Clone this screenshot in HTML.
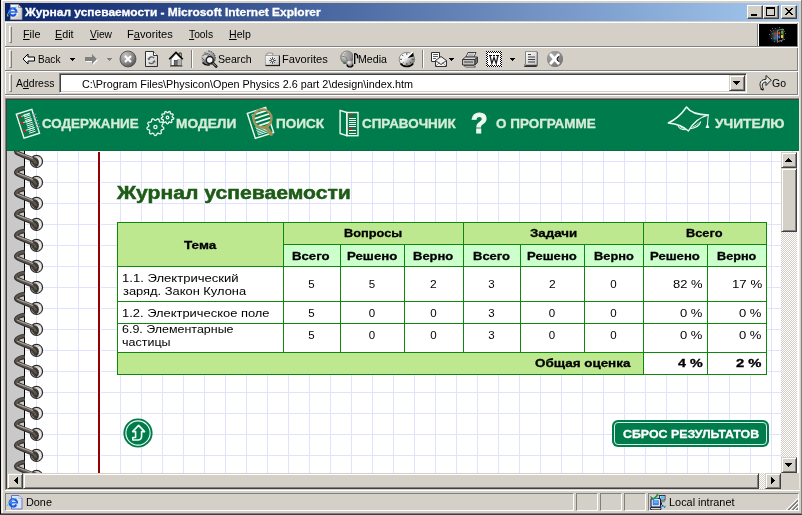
<!DOCTYPE html>
<html>
<head>
<meta charset="utf-8">
<title>Журнал успеваемости</title>
<style>
html,body{margin:0;padding:0;}
body{width:802px;height:515px;overflow:hidden;background:#d4d0c8;font-family:"Liberation Sans",sans-serif;font-size:11px;color:#000;position:relative;}
div,span,svg{position:absolute;}
.t{white-space:nowrap;transform-origin:0 0;display:block;}
u{text-decoration:underline;}
.btn{background:#d4d0c8;box-sizing:border-box;border:1px solid;border-color:#d4d0c8 #404040 #404040 #d4d0c8;box-shadow:inset 1px 1px 0 #fff,inset -1px -1px 0 #808080;}
.tb{background:#d4d0c8;box-sizing:border-box;border:1px solid;border-color:#fff #404040 #404040 #fff;box-shadow:inset -1px -1px 0 #808080;}
.grip{width:3px;box-sizing:border-box;border:1px solid;border-color:#fff #808080 #808080 #fff;}
.dither{background-image:conic-gradient(#fff 25%,#d4d0c8 0 50%,#fff 0 75%,#d4d0c8 0);background-size:2px 2px;}
.sunk{box-sizing:border-box;border:1px solid;border-color:#808080 #fff #fff #808080;}
#root{left:0;top:0;width:802px;height:515px;overflow:hidden;will-change:transform;}

</style>
</head>
<body>
<div id="root">
<svg width="0" height="0" style="left:0;top:0"><defs>
<radialGradient id="gStop" cx="0.35" cy="0.3" r="0.8"><stop offset="0" stop-color="#c8c8c8"/><stop offset="0.55" stop-color="#8c8c8c"/><stop offset="1" stop-color="#4a4a4a"/></radialGradient>
<radialGradient id="gGlobe" cx="0.35" cy="0.3" r="0.8"><stop offset="0" stop-color="#f0f0f0"/><stop offset="0.5" stop-color="#a8a8a8"/><stop offset="1" stop-color="#505050"/></radialGradient>
<linearGradient id="gPage" x1="0" y1="0" x2="1" y2="1"><stop offset="0" stop-color="#ffffff"/><stop offset="1" stop-color="#c4c4c4"/></linearGradient>
<linearGradient id="gFold" x1="0" y1="0" x2="1" y2="1"><stop offset="0" stop-color="#f4f4f4"/><stop offset="1" stop-color="#707070"/></linearGradient>
<linearGradient id="gWire" x1="0" y1="0" x2="0" y2="1"><stop offset="0" stop-color="#4a4540"/><stop offset="0.5" stop-color="#b0a8a0"/><stop offset="1" stop-color="#3a3530"/></linearGradient>
<radialGradient id="gRing" cx="0.6" cy="0.55" r="0.6"><stop offset="0" stop-color="#e8e8e8"/><stop offset="0.6" stop-color="#a0a0a0"/><stop offset="1" stop-color="#505050"/></radialGradient>
<radialGradient id="gHaze" cx="0.5" cy="0.5" r="0.5"><stop offset="0" stop-color="#7088a0" stop-opacity="0.75"/><stop offset="0.6" stop-color="#506878" stop-opacity="0.45"/><stop offset="1" stop-color="#304050" stop-opacity="0"/></radialGradient>
</defs></svg>
<div style="left:0px;top:0px;width:1px;height:515px;background:#000;"></div>
<div style="left:1px;top:0px;width:800px;height:1px;background:#fff;"></div>
<div style="left:1px;top:0px;width:1px;height:513px;background:#ebe9e5;"></div>
<div style="left:2px;top:1px;width:1px;height:512px;background:#f1f0ee;"></div>
<div style="left:801px;top:0px;width:1px;height:515px;background:#808080;"></div>
<div style="left:1px;top:513px;width:801px;height:1px;background:#808080;"></div>
<div style="left:0px;top:514px;width:802px;height:1px;background:#404040;"></div>
<div style="left:5px;top:3px;width:794px;height:18px;background:linear-gradient(to right,#0a246a 0%,#a6caf0 100%);"></div>
<svg style="left:6px;top:3px" width="18" height="18" viewBox="0 0 18 18" >
<path d="M4.5 1.5h8l3.5 3.5v11.5h-11.5z" fill="url(#gPage)" stroke="#9a9a9a" stroke-width="0.8"/>
<path d="M12.5 1.5v3.5h3.5z" fill="#505050"/>
<path d="M12.9 2.6v2h2z" fill="#fff"/>
<circle cx="6.8" cy="9" r="3.6" fill="none" stroke="#1c50d8" stroke-width="2.2"/>
<rect x="3" y="8.2" width="8" height="1.6" fill="#2a6cf0"/>
<path d="M7 9.8h5v3h-5z" fill="#eee" opacity="0.9"/>
<path d="M9.8 10.6c-.6 1.4-1.8 2-3 2" stroke="#1c50d8" stroke-width="2" fill="none"/>
<path d="M1.5 12c1-4 5-7.5 9-7.8" stroke="#38b0f0" stroke-width="1" fill="none"/>
<path d="M1.3 11.5l.8 2" stroke="#d0b020" stroke-width="1.2"/>
</svg>
<span class="t" id="t0" style="left:25.27px;top:4.65px;font-size:11.1px;line-height:15px;font-weight:bold;color:#fff;transform:scaleX(1.0773);-webkit-text-stroke:0.3px #fff;">Журнал успеваемости - Microsoft Internet Explorer</span>
<div class="tb" style="left:747px;top:5px;width:16px;height:14px;"></div>
<div class="tb" style="left:763px;top:5px;width:16px;height:14px;"></div>
<div class="tb" style="left:781px;top:5px;width:16px;height:14px;"></div>
<div style="left:751px;top:14px;width:6px;height:2px;background:#000;"></div>
<div style="left:766px;top:7px;width:9px;height:9px;box-sizing:border-box;border:1px solid #000;border-top-width:2px"></div>
<svg style="left:785px;top:8px" width="8" height="7" viewBox="0 0 8 7" shape-rendering="crispEdges"><path d="M0 0h2v1h-2zM6 0h2v1h-2zM1 1h2v1h-2zM5 1h2v1h-2zM2 2h4v1h-4zM3 3h2v1h-2zM2 4h4v1h-4zM1 5h2v1h-2zM5 5h2v1h-2zM0 6h2v1h-2zM6 6h2v1h-2z" fill="#000"/></svg>
<div style="left:5px;top:22px;width:794px;height:1px;background:#fff;"></div>
<div style="left:5px;top:22px;width:1px;height:73px;background:#fff;"></div>
<div style="left:797px;top:23px;width:1px;height:72px;background:#808080;"></div>
<div style="left:798px;top:22px;width:1px;height:74px;background:#fff;"></div>
<div style="left:5px;top:46px;width:793px;height:1px;background:#808080;"></div>
<div style="left:5px;top:47px;width:794px;height:1px;background:#fff;"></div>
<div style="left:5px;top:70px;width:793px;height:1px;background:#808080;"></div>
<div style="left:5px;top:71px;width:794px;height:1px;background:#fff;"></div>
<div style="left:5px;top:94px;width:793px;height:1px;background:#808080;"></div>
<div style="left:5px;top:95px;width:794px;height:1px;background:#fff;"></div>
<div class="grip" style="left:9px;top:26px;width:3px;height:17px;"></div>
<div class="grip" style="left:9px;top:50px;width:3px;height:18px;"></div>
<div class="grip" style="left:9px;top:74px;width:3px;height:18px;"></div>
<span class="t" id="t1" style="left:22.56px;top:26.52px;font-size:11.5px;line-height:15px;font-weight:normal;color:#000;transform:scaleX(0.9412);"><u>F</u>ile</span>
<span class="t" id="t2" style="left:54.57px;top:26.52px;font-size:11.5px;line-height:15px;font-weight:normal;color:#000;transform:scaleX(0.9333);"><u>E</u>dit</span>
<span class="t" id="t3" style="left:89.50px;top:26.52px;font-size:11.5px;line-height:15px;font-weight:normal;color:#000;transform:scaleX(0.8889);"><u>V</u>iew</span>
<span class="t" id="t4" style="left:126.53px;top:26.52px;font-size:11.5px;line-height:15px;font-weight:normal;color:#000;transform:scaleX(0.9674);">F<u>a</u>vorites</span>
<span class="t" id="t5" style="left:189.28px;top:26.52px;font-size:11.5px;line-height:15px;font-weight:normal;color:#000;transform:scaleX(0.8952);"><u>T</u>ools</span>
<span class="t" id="t6" style="left:228.58px;top:26.52px;font-size:11.5px;line-height:15px;font-weight:normal;color:#000;transform:scaleX(0.9213);"><u>H</u>elp</span>
<div style="left:757px;top:24px;width:1px;height:22px;background:#808080;"></div>
<div style="left:758px;top:24px;width:1px;height:22px;background:#fff;"></div>
<div style="left:759px;top:24px;width:38px;height:22px;background:#000;"></div>
<svg style="left:759px;top:24px" width="38" height="22" viewBox="0 0 38 22" >
<ellipse cx="18" cy="11.5" rx="9" ry="8.5" fill="url(#gHaze)"/>
<g fill="#8898a8" opacity="0.7"><rect x="11" y="6" width="1" height="1"/><rect x="13" y="4" width="1" height="1"/><rect x="12" y="14" width="1" height="1"/><rect x="15" y="17" width="1" height="1"/><rect x="10" y="10" width="1" height="1"/><rect x="24" y="5" width="1" height="1"/><rect x="26" y="9" width="1" height="1"/><rect x="25" y="15" width="1" height="1"/><rect x="20" y="3" width="1" height="1"/><rect x="22" y="17" width="1" height="1"/></g>
<g fill="#3a8a3a" opacity="0.8"><rect x="16" y="4" width="1" height="1"/><rect x="25" y="7" width="1" height="1"/><rect x="13" y="9" width="1" height="1"/></g>
<g fill="#b04030" opacity="0.8"><rect x="12" y="7" width="1" height="1"/><rect x="14" y="6" width="1" height="1"/><rect x="18" y="18" width="1" height="1"/></g>
<path d="M18.5 6.5l5.5-1.5v11l-5.5 1.5z" fill="#000" stroke="#c8c8c8" stroke-width="0.6"/>
<rect x="19.3" y="7.6" width="2" height="3" fill="#e04828"/>
<rect x="22" y="6.6" width="2" height="3.2" fill="#38b838"/>
<rect x="19.3" y="11.4" width="2" height="3" fill="#3878e8"/>
<rect x="22" y="10.8" width="2" height="3.2" fill="#f0c818"/>
<rect x="14.5" y="8.5" width="3" height="3" fill="#a04838" opacity="0.75"/>
<rect x="14.5" y="12.5" width="3" height="3" fill="#4870b0" opacity="0.75"/>
</svg>
<svg style="left:22px;top:53px" width="14" height="12" viewBox="0 0 14 12" ><path d="M1 6 L6 1 V4 H12.5 V8 H6 V11 Z" fill="#f4f4f4" stroke="#000" stroke-width="1" stroke-linejoin="miter"/></svg>
<svg style="left:70px;top:58px" width="5" height="3" viewBox="0 0 5 3" shape-rendering="crispEdges"><path d="M0 0h5v1h-5zM1 1h3v1h-3zM2 2h1v1h-1z" fill="#000"/></svg>
<svg style="left:84px;top:53px" width="15" height="13" viewBox="0 0 15 13" ><path d="M14 7 L9 2 V5 H2 V9 H9 V12 Z" fill="#fff"/><path d="M13 6 L8 1 V4 H1 V8 H8 V11 Z" fill="#808080"/></svg>
<svg style="left:107px;top:58px" width="5" height="3" viewBox="0 0 5 3" shape-rendering="crispEdges"><path d="M0 0h5v1h-5zM1 1h3v1h-3zM2 2h1v1h-1z" fill="#808080"/></svg>
<svg style="left:119px;top:50px" width="18" height="18" viewBox="0 0 18 18" ><circle cx="9" cy="9" r="8" fill="url(#gStop)" stroke="#484848" stroke-width="0.8"/><path d="M6 6l6 6M12 6l-6 6" stroke="#fff" stroke-width="2"/></svg>
<svg style="left:144px;top:50px" width="15" height="18" viewBox="0 0 15 18" ><path d="M1.5 1.5h8l4 4v11h-12z" fill="url(#gPage)" stroke="#303030" stroke-width="1"/><path d="M9.5 1.5v4h4" fill="#fff" stroke="#303030" stroke-width="1"/>
<path d="M10.2 8.2a3.2 3.2 0 0 0-5.6 1" fill="none" stroke="#606060" stroke-width="1.3"/><path d="M3.3 8.2l1.3 2.4l1.9-1.9z" fill="#606060"/>
<path d="M4.8 12.3a3.2 3.2 0 0 0 5.6-1" fill="none" stroke="#606060" stroke-width="1.3"/><path d="M11.7 12.3l-1.3-2.4l-1.9 1.9z" fill="#606060"/></svg>
<svg style="left:168px;top:50px" width="16" height="18" viewBox="0 0 16 18" ><path d="M11 3h2.2v4h-2.2z" fill="#e8e8e8" stroke="#000" stroke-width="0.8"/><path d="M3 9v6.5h10.5V9L8 3.5z" fill="#fff" stroke="#404040" stroke-width="0.8"/><path d="M9 9l4.5 0v6.5h-3z" fill="#b0b0b0"/><path d="M1.2 9.2L8 2.3l6.8 6.9" fill="none" stroke="#000" stroke-width="1.6"/><rect x="6.2" y="10.5" width="3" height="5" fill="#707070" stroke="#202020" stroke-width="0.6"/><path d="M2 16h12.5" stroke="#303030" stroke-width="1"/></svg>
<svg style="left:200px;top:50px" width="18" height="18" viewBox="0 0 18 18" ><circle cx="8.300" cy="8" r="7" fill="url(#gGlobe)"/><path d="M8.300 1a7 7 0 0 1 0 14" fill="none" stroke="#303030" stroke-width="1" stroke-dasharray="1.500 1"/><path d="M2.500 12.500a7 7 0 0 0 7 2.400" fill="none" stroke="#101010" stroke-width="1.300"/><path d="M2.500 5.500c2.500-1.500 5-1 6.500 .500M4 3c3 0 6 1 8 3.500M2 8c2 1.500 3 3 3 5" stroke="#606060" stroke-width="1" fill="none"/><circle cx="9.750" cy="10" r="3.500" fill="#f6f6f6" stroke="#202020" stroke-width="1.500"/><path d="M12.600 12.900l3.600 3.600" stroke="#101010" stroke-width="2.600" stroke-linecap="round"/><path d="M12.800 13.100l3 3" stroke="#c8c8c8" stroke-width="0.900" stroke-linecap="round"/></svg>
<svg style="left:264px;top:51px" width="17" height="16" viewBox="0 0 17 16" ><path d="M2.500 4.300l.800-2.200h5l.800 2.200z" fill="#fff" stroke="#707070" stroke-width="0.800"/><rect x="1.500" y="4.600" width="14.500" height="10.500" fill="#000"/><rect x="1.200" y="4.300" width="13.800" height="9.700" fill="url(#gPage)" stroke="#808080" stroke-width="0.500"/><path d="M8.500 6.200v6.600M5.200 9.500h6.600M6.200 7.200l4.600 4.600M10.800 7.200l-4.600 4.600" stroke="#383838" stroke-width="0.900"/><circle cx="8.500" cy="9.500" r="1.300" fill="#fff" stroke="#505050" stroke-width="0.800"/></svg>
<svg style="left:340px;top:50px" width="19" height="18" viewBox="0 0 19 18" ><circle cx="7" cy="7.400" r="6.400" fill="url(#gGlobe)" stroke="#686868" stroke-width="0.700"/><path d="M3 4l5-2.500l3.500 1v5l-4.500 2z" fill="#909090" opacity="0.600"/><path d="M1.500 6l4 1l2 4" stroke="#707070" stroke-width="0.800" fill="none"/><path d="M13.500 3.500v10" stroke="#fff" stroke-width="1"/><path d="M14.600 3.300v10.700" stroke="#000" stroke-width="1.500"/><path d="M14.600 3.600c2.600 .200 3.400 2 3 4.800" stroke="#000" stroke-width="1.400" fill="none"/><circle cx="9.900" cy="13.600" r="3.200" fill="url(#gGlobe)"/><path d="M6.800 14.500a3.300 3.300 0 0 0 6.400 0" fill="none" stroke="#000" stroke-width="1.200"/><rect x="3.200" y="12.600" width="2.200" height="1" fill="#106010"/></svg>
<svg style="left:398px;top:50px" width="18" height="18" viewBox="0 0 18 18" ><defs><linearGradient id="gHist" x1="0" y1="0" x2="1" y2="1"><stop offset="0" stop-color="#ffffff"/><stop offset="0.450" stop-color="#f0f0f0"/><stop offset="0.700" stop-color="#9a9a9a"/><stop offset="1" stop-color="#606060"/></linearGradient></defs><ellipse cx="8.900" cy="9.300" rx="7.700" ry="6.900" fill="url(#gHist)" stroke="#606060" stroke-width="0.700"/><path d="M2.500 13.500a7.700 6.900 0 0 0 12.800 0" fill="none" stroke="#000" stroke-width="1.400"/><path d="M8.600 8.200L15.200 1.800L15.700 6.600Z" fill="#000"/><path d="M8.300 8.300L15 1.700" stroke="#fff" stroke-width="1.500"/><path d="M8.800 3v2M2 9.300h2M8.800 13v2M13.600 9.300h2.200M4 4.800l1.300 1.300M4.200 13.600l1.200-1.200M13 13.200l-1.200-1.200" stroke="#404040" stroke-width="0.900"/></svg>
<svg style="left:430px;top:51px" width="17" height="16" viewBox="0 0 17 16" ><path d="M1.5 1.5h8v9h-8z" fill="#fff" stroke="#303030" stroke-width="1"/><path d="M3 3.5h5M3 5.5h5M3 7.5h3" stroke="#505050" stroke-width="0.9"/><path d="M5.5 9.5l5.5-4l5.5 4v6h-11z" fill="#f0f0f0" stroke="#303030" stroke-width="1"/><path d="M5.5 9.5l5.5 4l5.5-4" fill="none" stroke="#303030" stroke-width="0.9"/><path d="M5.5 15.5l4-4M16.5 15.5l-4-4" stroke="#707070" stroke-width="0.7"/></svg>
<svg style="left:449px;top:58px" width="5" height="3" viewBox="0 0 5 3" shape-rendering="crispEdges"><path d="M0 0h5v1h-5zM1 1h3v1h-3zM2 2h1v1h-1z" fill="#000"/></svg>
<svg style="left:461px;top:51px" width="18" height="17" viewBox="0 0 18 17" ><path d="M5 6l2-4.5h8l-2 4.5z" fill="#fff" stroke="#303030" stroke-width="0.9"/><path d="M7.5 3h5.5M7 4.3h5.5" stroke="#707070" stroke-width="0.7"/><path d="M1.5 8.5l3-2.5h12l-2.5 2.5z" fill="#d8d8d8" stroke="#303030" stroke-width="0.9"/><path d="M1.5 8.5h12.5v5.5h-12.5z" fill="#c0c0c0" stroke="#303030" stroke-width="0.9"/><path d="M14 8.5l2.5-2.5v5.5l-2.5 2.5z" fill="#707070" stroke="#303030" stroke-width="0.9"/><path d="M3 14.5h10l1.5 1.5h-10z" fill="#fff" stroke="#303030" stroke-width="0.8"/><path d="M3 11h9" stroke="#404040" stroke-width="1"/></svg>
<svg style="left:486px;top:51px" width="16" height="16" viewBox="0 0 16 16" shape-rendering="crispEdges"><defs><pattern id="chk" width="2" height="2" patternUnits="userSpaceOnUse"><rect width="2" height="2" fill="#fff"/><rect width="1" height="1" fill="#000"/><rect x="1" y="1" width="1" height="1" fill="#000"/></pattern></defs><rect x="0" y="0" width="16" height="16" fill="url(#chk)"/><rect x="2" y="2" width="12" height="12" fill="#fff"/><path d="M3 4h3M7 4h2M10 4h3" stroke="#000" stroke-width="1"/><path d="M4 4.500l1.800 8l2.200-6l2.200 6l1.800-8" fill="none" stroke="#202020" stroke-width="1.300" shape-rendering="geometricPrecision"/></svg>
<svg style="left:510px;top:58px" width="5" height="3" viewBox="0 0 5 3" shape-rendering="crispEdges"><path d="M0 0h5v1h-5zM1 1h3v1h-3zM2 2h1v1h-1z" fill="#000"/></svg>
<svg style="left:522px;top:51px" width="18" height="17" viewBox="0 0 18 17" ><path d="M3.500 1h12v14l-1.500 1h-12.500l2-1.500z" fill="#303030"/><path d="M3.500 .500h11.500v13.500h-13l1.500-1z" fill="url(#gPage)" stroke="#606060" stroke-width="0.600"/><path d="M6 3.500h3M6 6h7M6 8.500h7M6 11h7" stroke="#404040" stroke-width="1"/></svg>
<svg style="left:546px;top:50px" width="18" height="18" viewBox="0 0 18 18" ><circle cx="9" cy="9" r="8" fill="#8c8c8c"/><circle cx="9" cy="9" r="8" fill="url(#gStop)" opacity="0.450"/><path d="M4.800 4.800l7.500 8.400M4.800 13.200l7.500-8.400" fill="none" stroke="#fff" stroke-width="2.800" stroke-linecap="round"/><path d="M13 6.500c-2.500 1.200-2.500 3.800 0 5" fill="none" stroke="#202020" stroke-width="1.100"/></svg>
<span class="t" id="t7" style="left:38.12px;top:51.52px;font-size:11.5px;line-height:15px;font-weight:normal;color:#000;transform:scaleX(0.8776);">Back</span>
<span class="t" id="t8" style="left:218.04px;top:51.52px;font-size:11.5px;line-height:15px;font-weight:normal;color:#000;transform:scaleX(0.9220);">Search</span>
<span class="t" id="t9" style="left:281.53px;top:51.52px;font-size:11.5px;line-height:15px;font-weight:normal;color:#000;transform:scaleX(0.9674);">Favorites</span>
<span class="t" id="t10" style="left:357.57px;top:51.52px;font-size:11.5px;line-height:15px;font-weight:normal;color:#000;transform:scaleX(0.9256);">Media</span>
<div style="left:191px;top:50px;width:1px;height:18px;background:#808080;"></div>
<div style="left:192px;top:50px;width:1px;height:18px;background:#fff;"></div>
<div style="left:422px;top:50px;width:1px;height:18px;background:#808080;"></div>
<div style="left:423px;top:50px;width:1px;height:18px;background:#fff;"></div>
<span class="t" id="t11" style="left:16.00px;top:75.52px;font-size:11.5px;line-height:15px;font-weight:normal;color:#000;transform:scaleX(0.9102);">A<u>d</u>dress</span>
<div style="left:59px;top:73px;width:688px;height:20px;background:#fff;box-sizing:border-box;border:1px solid;border-color:#808080 #fff #fff #808080;box-shadow:inset 1px 1px 0 #404040,inset -1px -1px 0 #d4d0c8"></div>
<span class="t" id="t12" style="left:81.53px;top:76.52px;font-size:11.5px;line-height:15px;font-weight:normal;color:#000;transform:scaleX(0.9402);">C:\Program Files\Physicon\Open Physics 2.6 part 2\design\index.htm</span>
<div class="btn" style="left:729px;top:75px;width:16px;height:16px;"></div>
<svg style="left:733px;top:81px" width="7" height="4" viewBox="0 0 7 4" shape-rendering="crispEdges"><path d="M0 0h7v1h-7zM1 1h5v1h-5zM2 2h3v1h-3zM3 3h1v1h-1z" fill="#000"/></svg>
<svg style="left:757px;top:74px" width="16" height="18" viewBox="0 0 16 18" ><path d="M5.5 16 C1.5 12 2 5.500 9 5.200 V1.500 L14.200 6.200 L9 11.500 V8 C5.500 8 4 11 6.500 15.200 Z" fill="url(#gPage)" stroke="#202020" stroke-width="1" stroke-linejoin="round"/><path d="M3.500 14.800l3 1.200" stroke="#000" stroke-width="1.2"/></svg>
<span class="t" id="t13" style="left:772.04px;top:75.52px;font-size:11.5px;line-height:15px;font-weight:normal;color:#000;transform:scaleX(0.9123);">Go</span>
<div style="left:5px;top:98px;width:794px;height:1px;background:#808080;"></div>
<div style="left:5px;top:98px;width:1px;height:392px;background:#808080;"></div>
<div style="left:6px;top:99px;width:793px;height:1px;background:#404040;"></div>
<div style="left:6px;top:99px;width:1px;height:390px;background:#404040;"></div>
<div style="left:799px;top:98px;width:1px;height:393px;background:#ece8e4;"></div>
<div style="left:6px;top:489px;width:794px;height:1px;background:#d4d0c8;"></div>
<div style="left:5px;top:490px;width:795px;height:1px;background:#fff;"></div>
<div style="left:7px;top:100px;width:792px;height:51px;background:#007c4c;"></div>
<div style="left:7px;top:150px;width:792px;height:1px;background:#056c42;"></div>
<svg style="left:7px;top:100px" width="792" height="51" viewBox="0 0 792 51"><g transform="translate(9.30,14.30) rotate(-17.9)"><rect x="0" y="0" width="16.3" height="25.1" fill="none" stroke="#eefaf0" stroke-width="1.4"/><path d="M6.5 3.00H13.2" stroke="#eefaf0" stroke-width="0.9"/><path d="M6.5 4.90H13.2" stroke="#eefaf0" stroke-width="0.9"/><path d="M6.5 6.80H13.2" stroke="#eefaf0" stroke-width="0.9"/><path d="M6.5 8.70H13.2" stroke="#eefaf0" stroke-width="0.9"/><path d="M6.5 10.60H13.2" stroke="#eefaf0" stroke-width="0.9"/><path d="M6.5 12.50H13.2" stroke="#eefaf0" stroke-width="0.9"/><path d="M6.5 14.40H13.2" stroke="#eefaf0" stroke-width="0.9"/><path d="M6.5 16.30H13.2" stroke="#eefaf0" stroke-width="0.9"/><path d="M6.5 18.20H13.2" stroke="#eefaf0" stroke-width="0.9"/><path d="M6.5 20.10H13.2" stroke="#eefaf0" stroke-width="0.9"/><path d="M6.5 22.00H13.2" stroke="#eefaf0" stroke-width="0.9"/><path d="M3.5 3.60H13.2" stroke="#eefaf0" stroke-width="0.8"/><circle cx="2.9" cy="3.60" r="1.25" fill="#f01010"/><path d="M3.5 10.00H13.2" stroke="#eefaf0" stroke-width="0.8"/><circle cx="2.9" cy="10.00" r="1.25" fill="#f01010"/><path d="M3.5 18.20H13.2" stroke="#eefaf0" stroke-width="0.8"/><circle cx="2.9" cy="18.20" r="1.25" fill="#f01010"/><path d="M15 5.80H19" stroke="#8a9aa8" stroke-width="1"/><path d="M15 9.10H19" stroke="#8a9aa8" stroke-width="1"/><path d="M15 12.40H19" stroke="#8a9aa8" stroke-width="1"/><path d="M15 15.70H19" stroke="#8a9aa8" stroke-width="1"/><path d="M15 19.00H19" stroke="#8a9aa8" stroke-width="1"/></g><path d="M156.77 27.84 L156.81 28.22 L156.75 28.58 L156.67 28.95 L156.33 29.23 L155.89 29.47 L155.40 29.65 L154.92 29.80 L154.52 29.95 L154.30 30.17 L154.16 30.42 L154.00 30.67 L154.05 31.06 L154.15 31.53 L154.25 32.04 L154.30 32.55 L154.27 33.02 L154.06 33.34 L153.78 33.58 L153.49 33.81 L153.04 33.81 L152.55 33.70 L152.06 33.53 L151.60 33.34 L151.19 33.19 L150.88 33.22 L150.61 33.32 L150.33 33.42 L150.11 33.74 L149.89 34.16 L149.64 34.62 L149.36 35.05 L149.03 35.39 L148.66 35.50 L148.29 35.50 L147.92 35.49 L147.58 35.20 L147.27 34.80 L147.01 34.35 L146.78 33.91 L146.56 33.54 L146.30 33.36 L146.03 33.27 L145.76 33.16 L145.38 33.27 L144.94 33.45 L144.46 33.63 L143.96 33.78 L143.49 33.83 L143.14 33.68 L142.85 33.44 L142.58 33.19 L142.50 32.75 L142.52 32.25 L142.61 31.74 L142.71 31.25 L142.79 30.82 L142.70 30.53 L142.56 30.28 L142.42 30.02 L142.06 29.86 L141.61 29.71 L141.11 29.55 L140.64 29.34 L140.25 29.07 L140.08 28.73 L140.01 28.37 L139.96 28.00 L140.18 27.61 L140.52 27.24 L140.92 26.90 L141.31 26.60 L141.64 26.32 L141.77 26.04 L141.82 25.75 L141.88 25.47 L141.70 25.11 L141.45 24.71 L141.18 24.27 L140.95 23.80 L140.82 23.35 L140.91 22.98 L141.09 22.66 L141.29 22.34 L141.71 22.19 L142.21 22.12 L142.73 22.12 L143.23 22.14 L143.66 22.14 L143.94 22.00 L144.16 21.81 L144.39 21.63 L144.48 21.25 L144.55 20.78 L144.63 20.27 L144.75 19.77 L144.94 19.33 L145.25 19.11 L145.59 18.98 L145.95 18.86 L146.37 19.01 L146.79 19.28 L147.19 19.62 L147.56 19.95 L147.89 20.23 L148.19 20.30 L148.49 20.30 L148.78 20.31 L149.09 20.08 L149.45 19.76 L149.84 19.42 L150.25 19.11 L150.68 18.90 L151.06 18.93 L151.41 19.05 L151.75 19.19 L151.98 19.57 L152.13 20.05 L152.22 20.57 L152.29 21.06 L152.36 21.49 L152.55 21.74 L152.77 21.92 L152.99 22.12 L153.38 22.14 L153.86 22.13 L154.38 22.11 L154.89 22.15 L155.35 22.26 L155.63 22.52 L155.81 22.84 L155.99 23.17 L155.91 23.61 L155.72 24.08 L155.46 24.53 L155.20 24.95 L154.98 25.33 L154.96 25.63 L155.01 25.92 L155.05 26.21 L155.34 26.48 L155.71 26.77 L156.12 27.10 L156.49 27.46 L156.77 27.84Z" fill="none" stroke="#eefaf0" stroke-width="1.3" stroke-linejoin="round"/><circle cx="148.40" cy="27.00" r="1.6" fill="none" stroke="#eefaf0" stroke-width="1.3"/><path d="M165.71 19.40 L165.31 19.50 L164.97 19.59 L164.76 19.72 L164.65 19.90 L164.55 20.08 L164.55 20.34 L164.64 20.69 L164.75 21.08 L164.84 21.48 L164.86 21.86 L164.75 22.15 L164.55 22.33 L164.33 22.50 L164.03 22.54 L163.65 22.46 L163.27 22.30 L162.90 22.13 L162.58 21.97 L162.33 21.94 L162.14 22.01 L161.94 22.08 L161.78 22.28 L161.63 22.60 L161.46 22.97 L161.26 23.34 L161.03 23.64 L160.77 23.79 L160.49 23.80 L160.22 23.79 L159.96 23.63 L159.73 23.32 L159.53 22.96 L159.37 22.59 L159.22 22.27 L159.05 22.08 L158.85 22.01 L158.66 21.93 L158.41 21.98 L158.08 22.13 L157.72 22.31 L157.33 22.46 L156.96 22.55 L156.66 22.49 L156.45 22.32 L156.24 22.14 L156.14 21.85 L156.17 21.46 L156.25 21.06 L156.36 20.67 L156.45 20.33 L156.45 20.08 L156.34 19.90 L156.24 19.71 L156.02 19.59 L155.67 19.50 L155.28 19.40 L154.88 19.26 L154.54 19.09 L154.35 18.86 L154.29 18.59 L154.25 18.32 L154.37 18.03 L154.63 17.75 L154.96 17.49 L155.29 17.27 L155.58 17.07 L155.74 16.87 L155.77 16.66 L155.81 16.46 L155.72 16.22 L155.52 15.92 L155.28 15.59 L155.06 15.24 L154.92 14.89 L154.91 14.59 L155.05 14.34 L155.19 14.11 L155.46 13.97 L155.84 13.92 L156.26 13.93 L156.66 13.97 L157.01 14.01 L157.26 13.96 L157.42 13.82 L157.58 13.69 L157.67 13.45 L157.70 13.09 L157.73 12.68 L157.79 12.28 L157.90 11.91 L158.09 11.68 L158.35 11.58 L158.61 11.49 L158.91 11.55 L159.23 11.76 L159.54 12.04 L159.82 12.33 L160.07 12.58 L160.30 12.70 L160.50 12.70 L160.71 12.70 L160.94 12.57 L161.19 12.32 L161.47 12.03 L161.78 11.75 L162.10 11.55 L162.40 11.49 L162.66 11.58 L162.92 11.68 L163.11 11.92 L163.22 12.29 L163.28 12.70 L163.31 13.11 L163.33 13.46 L163.43 13.69 L163.59 13.83 L163.75 13.96 L164.00 14.01 L164.36 13.97 L164.76 13.93 L165.17 13.92 L165.55 13.97 L165.82 14.12 L165.96 14.36 L166.09 14.60 L166.08 14.90 L165.93 15.26 L165.71 15.61 L165.47 15.94 L165.27 16.23 L165.19 16.47 L165.23 16.67 L165.26 16.88 L165.43 17.07 L165.72 17.28 L166.06 17.51 L166.38 17.76 L166.64 18.04 L166.75 18.33 L166.70 18.60 L166.65 18.87 L166.44 19.10 L166.10 19.27 L165.71 19.40Z" fill="none" stroke="#eefaf0" stroke-width="1.3" stroke-linejoin="round"/><circle cx="160.50" cy="17.50" r="1.3" fill="none" stroke="#eefaf0" stroke-width="1.3"/><g transform="translate(240.30,13.40) rotate(-17.9)"><rect x="0" y="0" width="19.2" height="26.2" fill="none" stroke="#eefaf0" stroke-width="1.45"/><path d="M3.5 3.00H16" stroke="#eefaf0" stroke-width="0.85"/><path d="M3.5 4.60H16" stroke="#eefaf0" stroke-width="0.85"/><path d="M3.5 6.20H16" stroke="#eefaf0" stroke-width="0.85"/><path d="M3.5 7.80H16" stroke="#eefaf0" stroke-width="0.85"/><path d="M3.5 9.40H16" stroke="#eefaf0" stroke-width="0.85"/><path d="M3.5 11.00H16" stroke="#eefaf0" stroke-width="0.85"/><path d="M3.5 12.60H16" stroke="#eefaf0" stroke-width="0.85"/><path d="M3.5 14.20H16" stroke="#eefaf0" stroke-width="0.85"/><path d="M3.5 15.80H16" stroke="#eefaf0" stroke-width="0.85"/><path d="M3.5 17.40H16" stroke="#eefaf0" stroke-width="0.85"/><path d="M3.5 19.00H16" stroke="#eefaf0" stroke-width="0.85"/><path d="M3.5 20.60H16" stroke="#eefaf0" stroke-width="0.85"/><path d="M3.5 22.20H16" stroke="#eefaf0" stroke-width="0.85"/><path d="M3.5 23.80H16" stroke="#eefaf0" stroke-width="0.85"/></g><circle cx="255.5" cy="18.400000000000006" r="8.6" fill="#007c4c"/><g transform="translate(255.5,18.400000000000006) rotate(-17.9)"><clipPath id="lensclip"><circle cx="0" cy="0" r="8.2"/></clipPath><g clip-path="url(#lensclip)"><path d="M-9 -6.2H9" stroke="#f4fff6" stroke-width="1.7"/><path d="M-9 -2.2H9" stroke="#f4fff6" stroke-width="1.7"/><path d="M-9 1.8H9" stroke="#f4fff6" stroke-width="1.7"/><path d="M-9 5.8H9" stroke="#f4fff6" stroke-width="1.7"/></g></g><circle cx="255.5" cy="18.400000000000006" r="9.1" fill="none" stroke="#a39258" stroke-width="2.3"/><path d="M259.30 27.20L264.30 34.30" stroke="#a08e52" stroke-width="3.4" stroke-linecap="round"/><path d="M333.10,10.30 L339.80,12.50 L339.80,35.70 L333.10,33.50Z" fill="none" stroke="#eefaf0" stroke-width="1.4" stroke-linejoin="round"/><rect x="339.80" y="12.50" width="11.2" height="23.2" fill="none" stroke="#eefaf0" stroke-width="1.4"/><path d="M342.00 18.50L349.00 18.50" stroke="#eefaf0" stroke-width="1.0"/><path d="M342.00 20.50L349.00 20.50" stroke="#eefaf0" stroke-width="1.0"/><path d="M342.00 22.50L349.00 22.50" stroke="#eefaf0" stroke-width="1.0"/><path d="M342.00 24.50L349.00 24.50" stroke="#eefaf0" stroke-width="1.0"/><path d="M342.00 26.50L349.00 26.50" stroke="#eefaf0" stroke-width="1.0"/><path d="M342.00 30.50L349.00 30.50" stroke="#eefaf0" stroke-width="1.0"/><path d="M342.00 33.50L349.00 33.50" stroke="#eefaf0" stroke-width="1.0"/><path d="M342.00 15.80L346.00 15.80" stroke="#e81010" stroke-width="1.5"/><path d="M342.00 28.60L346.00 28.60" stroke="#e81010" stroke-width="1.5"/><path d="M661.30,23.00 Q672.00,18.00 679.50,7.00 Q685.00,15.00 701.50,14.90 Q689.00,18.00 681.40,31.00 Q675.00,24.50 661.30,23.00Z" fill="none" stroke="#eefaf0" stroke-width="1.45" stroke-linejoin="round"/><path d="M701.20,15.00 L700.50,24.00" stroke="#eefaf0" stroke-width="1.1"/><path d="M700.50,23.00 L702.30,28.00 L698.50,28.00Z" fill="#eefaf0"/><path d="M671.00,25.20 Q671.50,29.50 679.50,29.80" fill="none" stroke="#eefaf0" stroke-width="1.1"/><path d="M673.00,26.50 Q674.50,28.30 678.00,28.50" fill="none" stroke="#eefaf0" stroke-width="0.8"/><path d="M683.50,28.60 Q692.00,27.50 693.80,21.50" fill="none" stroke="#eefaf0" stroke-width="1.1"/><path d="M685.50,27.00 Q690.00,25.50 691.80,22.50" fill="none" stroke="#eefaf0" stroke-width="0.8"/></svg>
<span class="t" id="t14" style="left:42.22px;top:115.84px;font-size:12px;line-height:16px;font-weight:bold;color:#d6ecd8;transform:scaleX(1.1130);-webkit-text-stroke:0.3px #d6ecd8;">СОДЕРЖАНИЕ</span>
<span class="t" id="t15" style="left:176.14px;top:115.84px;font-size:12px;line-height:16px;font-weight:bold;color:#d6ecd8;transform:scaleX(1.1415);-webkit-text-stroke:0.3px #d6ecd8;">МОДЕЛИ</span>
<span class="t" id="t16" style="left:275.65px;top:115.84px;font-size:12px;line-height:16px;font-weight:bold;color:#d6ecd8;transform:scaleX(1.1310);-webkit-text-stroke:0.3px #d6ecd8;">ПОИСК</span>
<span class="t" id="t17" style="left:361.72px;top:115.84px;font-size:12px;line-height:16px;font-weight:bold;color:#d6ecd8;transform:scaleX(1.1198);-webkit-text-stroke:0.3px #d6ecd8;">СПРАВОЧНИК</span>
<span class="t" id="t18" style="left:471.32px;top:104.97px;font-size:29.8px;line-height:36px;font-weight:bold;color:#eef8f0;transform:scaleX(0.9108);-webkit-text-stroke:1.2px #eef8f0;">?</span>
<span class="t" id="t19" style="left:496.22px;top:115.84px;font-size:12px;line-height:16px;font-weight:bold;color:#d6ecd8;transform:scaleX(1.1218);-webkit-text-stroke:0.3px #d6ecd8;">О ПРОГРАММЕ</span>
<span class="t" id="t20" style="left:715.00px;top:115.84px;font-size:12px;line-height:16px;font-weight:bold;color:#d6ecd8;transform:scaleX(1.1452);-webkit-text-stroke:0.3px #d6ecd8;">УЧИТЕЛЮ</span>
<div style="left:7px;top:151px;width:792px;height:322px;background-color:#fff;background-image:linear-gradient(to right,#e0e3fe 1px,transparent 1px),linear-gradient(to bottom,#e0e3fe 1px,transparent 1px);background-size:21px 21px;background-position:8px 10px"></div>
<div style="left:7px;top:151px;width:17px;height:322px;background:#c9c9c9;"></div>
<div style="left:24px;top:151px;width:1px;height:322px;background:#000;"></div>
<div style="left:97px;top:152px;width:4px;height:321px;background:#fff;"></div>
<div style="left:98px;top:152px;width:2px;height:321px;background:#990000;"></div>
<div style="left:797px;top:151px;width:2px;height:322px;background:#fff;"></div>
<svg style="left:7px;top:151px" width="50" height="322" viewBox="0 0 50 322"><defs><radialGradient id="gHook" cx="0.35" cy="0.3" r="0.8"><stop offset="0" stop-color="#6a645e"/><stop offset="0.6" stop-color="#403b36"/><stop offset="1" stop-color="#2c2824"/></radialGradient></defs><circle cx="29.5" cy="-10.60" r="6.0" fill="#e6e6e6" stroke="#2a2622" stroke-width="1.2"/><clipPath id="rc0"><circle cx="29.5" cy="-10.60" r="5.5"/></clipPath><g clip-path="url(#rc0)"><circle cx="31.70" cy="-10.60" r="4.6" fill="none" stroke="#c4c4c4" stroke-width="1.6"/><circle cx="26.40" cy="-9.60" r="5.5" fill="url(#gHook)"/><path d="M25.20 -8.00l1.800 2.200" stroke="#a09a92" stroke-width="0.800"/></g><circle cx="29.5" cy="10.40" r="6.0" fill="#e6e6e6" stroke="#2a2622" stroke-width="1.2"/><clipPath id="rc1"><circle cx="29.5" cy="10.40" r="5.5"/></clipPath><g clip-path="url(#rc1)"><circle cx="31.70" cy="10.40" r="4.6" fill="none" stroke="#c4c4c4" stroke-width="1.6"/><circle cx="26.40" cy="11.40" r="5.5" fill="url(#gHook)"/><path d="M25.20 13.00l1.800 2.200" stroke="#a09a92" stroke-width="0.800"/></g><circle cx="29.5" cy="31.40" r="6.0" fill="#e6e6e6" stroke="#2a2622" stroke-width="1.2"/><clipPath id="rc2"><circle cx="29.5" cy="31.40" r="5.5"/></clipPath><g clip-path="url(#rc2)"><circle cx="31.70" cy="31.40" r="4.6" fill="none" stroke="#c4c4c4" stroke-width="1.6"/><circle cx="26.40" cy="32.40" r="5.5" fill="url(#gHook)"/><path d="M25.20 34.00l1.800 2.200" stroke="#a09a92" stroke-width="0.800"/></g><circle cx="29.5" cy="52.40" r="6.0" fill="#e6e6e6" stroke="#2a2622" stroke-width="1.2"/><clipPath id="rc3"><circle cx="29.5" cy="52.40" r="5.5"/></clipPath><g clip-path="url(#rc3)"><circle cx="31.70" cy="52.40" r="4.6" fill="none" stroke="#c4c4c4" stroke-width="1.6"/><circle cx="26.40" cy="53.40" r="5.5" fill="url(#gHook)"/><path d="M25.20 55.00l1.800 2.200" stroke="#a09a92" stroke-width="0.800"/></g><circle cx="29.5" cy="73.40" r="6.0" fill="#e6e6e6" stroke="#2a2622" stroke-width="1.2"/><clipPath id="rc4"><circle cx="29.5" cy="73.40" r="5.5"/></clipPath><g clip-path="url(#rc4)"><circle cx="31.70" cy="73.40" r="4.6" fill="none" stroke="#c4c4c4" stroke-width="1.6"/><circle cx="26.40" cy="74.40" r="5.5" fill="url(#gHook)"/><path d="M25.20 76.00l1.800 2.200" stroke="#a09a92" stroke-width="0.800"/></g><circle cx="29.5" cy="94.40" r="6.0" fill="#e6e6e6" stroke="#2a2622" stroke-width="1.2"/><clipPath id="rc5"><circle cx="29.5" cy="94.40" r="5.5"/></clipPath><g clip-path="url(#rc5)"><circle cx="31.70" cy="94.40" r="4.6" fill="none" stroke="#c4c4c4" stroke-width="1.6"/><circle cx="26.40" cy="95.40" r="5.5" fill="url(#gHook)"/><path d="M25.20 97.00l1.800 2.200" stroke="#a09a92" stroke-width="0.800"/></g><circle cx="29.5" cy="115.40" r="6.0" fill="#e6e6e6" stroke="#2a2622" stroke-width="1.2"/><clipPath id="rc6"><circle cx="29.5" cy="115.40" r="5.5"/></clipPath><g clip-path="url(#rc6)"><circle cx="31.70" cy="115.40" r="4.6" fill="none" stroke="#c4c4c4" stroke-width="1.6"/><circle cx="26.40" cy="116.40" r="5.5" fill="url(#gHook)"/><path d="M25.20 118.00l1.800 2.200" stroke="#a09a92" stroke-width="0.800"/></g><circle cx="29.5" cy="136.40" r="6.0" fill="#e6e6e6" stroke="#2a2622" stroke-width="1.2"/><clipPath id="rc7"><circle cx="29.5" cy="136.40" r="5.5"/></clipPath><g clip-path="url(#rc7)"><circle cx="31.70" cy="136.40" r="4.6" fill="none" stroke="#c4c4c4" stroke-width="1.6"/><circle cx="26.40" cy="137.40" r="5.5" fill="url(#gHook)"/><path d="M25.20 139.00l1.800 2.200" stroke="#a09a92" stroke-width="0.800"/></g><circle cx="29.5" cy="157.40" r="6.0" fill="#e6e6e6" stroke="#2a2622" stroke-width="1.2"/><clipPath id="rc8"><circle cx="29.5" cy="157.40" r="5.5"/></clipPath><g clip-path="url(#rc8)"><circle cx="31.70" cy="157.40" r="4.6" fill="none" stroke="#c4c4c4" stroke-width="1.6"/><circle cx="26.40" cy="158.40" r="5.5" fill="url(#gHook)"/><path d="M25.20 160.00l1.800 2.200" stroke="#a09a92" stroke-width="0.800"/></g><circle cx="29.5" cy="178.40" r="6.0" fill="#e6e6e6" stroke="#2a2622" stroke-width="1.2"/><clipPath id="rc9"><circle cx="29.5" cy="178.40" r="5.5"/></clipPath><g clip-path="url(#rc9)"><circle cx="31.70" cy="178.40" r="4.6" fill="none" stroke="#c4c4c4" stroke-width="1.6"/><circle cx="26.40" cy="179.40" r="5.5" fill="url(#gHook)"/><path d="M25.20 181.00l1.800 2.200" stroke="#a09a92" stroke-width="0.800"/></g><circle cx="29.5" cy="199.40" r="6.0" fill="#e6e6e6" stroke="#2a2622" stroke-width="1.2"/><clipPath id="rc10"><circle cx="29.5" cy="199.40" r="5.5"/></clipPath><g clip-path="url(#rc10)"><circle cx="31.70" cy="199.40" r="4.6" fill="none" stroke="#c4c4c4" stroke-width="1.6"/><circle cx="26.40" cy="200.40" r="5.5" fill="url(#gHook)"/><path d="M25.20 202.00l1.800 2.200" stroke="#a09a92" stroke-width="0.800"/></g><circle cx="29.5" cy="220.40" r="6.0" fill="#e6e6e6" stroke="#2a2622" stroke-width="1.2"/><clipPath id="rc11"><circle cx="29.5" cy="220.40" r="5.5"/></clipPath><g clip-path="url(#rc11)"><circle cx="31.70" cy="220.40" r="4.6" fill="none" stroke="#c4c4c4" stroke-width="1.6"/><circle cx="26.40" cy="221.40" r="5.5" fill="url(#gHook)"/><path d="M25.20 223.00l1.800 2.200" stroke="#a09a92" stroke-width="0.800"/></g><circle cx="29.5" cy="241.40" r="6.0" fill="#e6e6e6" stroke="#2a2622" stroke-width="1.2"/><clipPath id="rc12"><circle cx="29.5" cy="241.40" r="5.5"/></clipPath><g clip-path="url(#rc12)"><circle cx="31.70" cy="241.40" r="4.6" fill="none" stroke="#c4c4c4" stroke-width="1.6"/><circle cx="26.40" cy="242.40" r="5.5" fill="url(#gHook)"/><path d="M25.20 244.00l1.800 2.200" stroke="#a09a92" stroke-width="0.800"/></g><circle cx="29.5" cy="262.40" r="6.0" fill="#e6e6e6" stroke="#2a2622" stroke-width="1.2"/><clipPath id="rc13"><circle cx="29.5" cy="262.40" r="5.5"/></clipPath><g clip-path="url(#rc13)"><circle cx="31.70" cy="262.40" r="4.6" fill="none" stroke="#c4c4c4" stroke-width="1.6"/><circle cx="26.40" cy="263.40" r="5.5" fill="url(#gHook)"/><path d="M25.20 265.00l1.800 2.200" stroke="#a09a92" stroke-width="0.800"/></g><circle cx="29.5" cy="283.40" r="6.0" fill="#e6e6e6" stroke="#2a2622" stroke-width="1.2"/><clipPath id="rc14"><circle cx="29.5" cy="283.40" r="5.5"/></clipPath><g clip-path="url(#rc14)"><circle cx="31.70" cy="283.40" r="4.6" fill="none" stroke="#c4c4c4" stroke-width="1.6"/><circle cx="26.40" cy="284.40" r="5.5" fill="url(#gHook)"/><path d="M25.20 286.00l1.800 2.200" stroke="#a09a92" stroke-width="0.800"/></g><circle cx="29.5" cy="304.40" r="6.0" fill="#e6e6e6" stroke="#2a2622" stroke-width="1.2"/><clipPath id="rc15"><circle cx="29.5" cy="304.40" r="5.5"/></clipPath><g clip-path="url(#rc15)"><circle cx="31.70" cy="304.40" r="4.6" fill="none" stroke="#c4c4c4" stroke-width="1.6"/><circle cx="26.40" cy="305.40" r="5.5" fill="url(#gHook)"/><path d="M25.20 307.00l1.800 2.200" stroke="#a09a92" stroke-width="0.800"/></g><circle cx="29.5" cy="325.40" r="6.0" fill="#e6e6e6" stroke="#2a2622" stroke-width="1.2"/><clipPath id="rc16"><circle cx="29.5" cy="325.40" r="5.5"/></clipPath><g clip-path="url(#rc16)"><circle cx="31.70" cy="325.40" r="4.6" fill="none" stroke="#c4c4c4" stroke-width="1.6"/><circle cx="26.40" cy="326.40" r="5.5" fill="url(#gHook)"/><path d="M25.20 328.00l1.800 2.200" stroke="#a09a92" stroke-width="0.800"/></g><circle cx="29.5" cy="346.40" r="6.0" fill="#e6e6e6" stroke="#2a2622" stroke-width="1.2"/><clipPath id="rc17"><circle cx="29.5" cy="346.40" r="5.5"/></clipPath><g clip-path="url(#rc17)"><circle cx="31.70" cy="346.40" r="4.6" fill="none" stroke="#c4c4c4" stroke-width="1.6"/><circle cx="26.40" cy="347.40" r="5.5" fill="url(#gHook)"/><path d="M25.20 349.00l1.800 2.200" stroke="#a09a92" stroke-width="0.800"/></g><path d="M17.60 -25.00 C14.50 -24.60 10.20 -23.00 9.30 -20.80 C9.00 -19.40 11.50 -18.10 17.40 -15.90 C20.00 -15.00 22.50 -14.00 24.50 -13.00 C27.00 -11.80 29.00 -10.00 28.60 -8.00" fill="none" stroke="#35312d" stroke-width="4.6"/><path d="M17.60 -25.00 C14.50 -24.60 10.20 -23.00 9.30 -20.80 C9.00 -19.40 11.50 -18.10 17.40 -15.90 C20.00 -15.00 22.50 -14.00 24.50 -13.00 C27.00 -11.80 29.00 -10.00 28.60 -8.00" fill="none" stroke="#5c5650" stroke-width="2.6" transform="translate(0,-0.2)"/><path d="M10.50 -19.20 C12.50 -18.00 15.00 -17.30 17.40 -16.50 C20.00 -15.60 23.00 -14.50 25.50 -13.20" fill="none" stroke="#aaa49c" stroke-width="1.3" stroke-linecap="round" transform="translate(0,-0.5)"/><path d="M17.60 -4.00 C14.50 -3.60 10.20 -2.00 9.30 0.20 C9.00 1.60 11.50 2.90 17.40 5.10 C20.00 6.00 22.50 7.00 24.50 8.00 C27.00 9.20 29.00 11.00 28.60 13.00" fill="none" stroke="#35312d" stroke-width="4.6"/><path d="M17.60 -4.00 C14.50 -3.60 10.20 -2.00 9.30 0.20 C9.00 1.60 11.50 2.90 17.40 5.10 C20.00 6.00 22.50 7.00 24.50 8.00 C27.00 9.20 29.00 11.00 28.60 13.00" fill="none" stroke="#5c5650" stroke-width="2.6" transform="translate(0,-0.2)"/><path d="M10.50 1.80 C12.50 3.00 15.00 3.70 17.40 4.50 C20.00 5.40 23.00 6.50 25.50 7.80" fill="none" stroke="#aaa49c" stroke-width="1.3" stroke-linecap="round" transform="translate(0,-0.5)"/><path d="M17.60 17.00 C14.50 17.40 10.20 19.00 9.30 21.20 C9.00 22.60 11.50 23.90 17.40 26.10 C20.00 27.00 22.50 28.00 24.50 29.00 C27.00 30.20 29.00 32.00 28.60 34.00" fill="none" stroke="#35312d" stroke-width="4.6"/><path d="M17.60 17.00 C14.50 17.40 10.20 19.00 9.30 21.20 C9.00 22.60 11.50 23.90 17.40 26.10 C20.00 27.00 22.50 28.00 24.50 29.00 C27.00 30.20 29.00 32.00 28.60 34.00" fill="none" stroke="#5c5650" stroke-width="2.6" transform="translate(0,-0.2)"/><path d="M10.50 22.80 C12.50 24.00 15.00 24.70 17.40 25.50 C20.00 26.40 23.00 27.50 25.50 28.80" fill="none" stroke="#aaa49c" stroke-width="1.3" stroke-linecap="round" transform="translate(0,-0.5)"/><path d="M17.60 38.00 C14.50 38.40 10.20 40.00 9.30 42.20 C9.00 43.60 11.50 44.90 17.40 47.10 C20.00 48.00 22.50 49.00 24.50 50.00 C27.00 51.20 29.00 53.00 28.60 55.00" fill="none" stroke="#35312d" stroke-width="4.6"/><path d="M17.60 38.00 C14.50 38.40 10.20 40.00 9.30 42.20 C9.00 43.60 11.50 44.90 17.40 47.10 C20.00 48.00 22.50 49.00 24.50 50.00 C27.00 51.20 29.00 53.00 28.60 55.00" fill="none" stroke="#5c5650" stroke-width="2.6" transform="translate(0,-0.2)"/><path d="M10.50 43.80 C12.50 45.00 15.00 45.70 17.40 46.50 C20.00 47.40 23.00 48.50 25.50 49.80" fill="none" stroke="#aaa49c" stroke-width="1.3" stroke-linecap="round" transform="translate(0,-0.5)"/><path d="M17.60 59.00 C14.50 59.40 10.20 61.00 9.30 63.20 C9.00 64.60 11.50 65.90 17.40 68.10 C20.00 69.00 22.50 70.00 24.50 71.00 C27.00 72.20 29.00 74.00 28.60 76.00" fill="none" stroke="#35312d" stroke-width="4.6"/><path d="M17.60 59.00 C14.50 59.40 10.20 61.00 9.30 63.20 C9.00 64.60 11.50 65.90 17.40 68.10 C20.00 69.00 22.50 70.00 24.50 71.00 C27.00 72.20 29.00 74.00 28.60 76.00" fill="none" stroke="#5c5650" stroke-width="2.6" transform="translate(0,-0.2)"/><path d="M10.50 64.80 C12.50 66.00 15.00 66.70 17.40 67.50 C20.00 68.40 23.00 69.50 25.50 70.80" fill="none" stroke="#aaa49c" stroke-width="1.3" stroke-linecap="round" transform="translate(0,-0.5)"/><path d="M17.60 80.00 C14.50 80.40 10.20 82.00 9.30 84.20 C9.00 85.60 11.50 86.90 17.40 89.10 C20.00 90.00 22.50 91.00 24.50 92.00 C27.00 93.20 29.00 95.00 28.60 97.00" fill="none" stroke="#35312d" stroke-width="4.6"/><path d="M17.60 80.00 C14.50 80.40 10.20 82.00 9.30 84.20 C9.00 85.60 11.50 86.90 17.40 89.10 C20.00 90.00 22.50 91.00 24.50 92.00 C27.00 93.20 29.00 95.00 28.60 97.00" fill="none" stroke="#5c5650" stroke-width="2.6" transform="translate(0,-0.2)"/><path d="M10.50 85.80 C12.50 87.00 15.00 87.70 17.40 88.50 C20.00 89.40 23.00 90.50 25.50 91.80" fill="none" stroke="#aaa49c" stroke-width="1.3" stroke-linecap="round" transform="translate(0,-0.5)"/><path d="M17.60 101.00 C14.50 101.40 10.20 103.00 9.30 105.20 C9.00 106.60 11.50 107.90 17.40 110.10 C20.00 111.00 22.50 112.00 24.50 113.00 C27.00 114.20 29.00 116.00 28.60 118.00" fill="none" stroke="#35312d" stroke-width="4.6"/><path d="M17.60 101.00 C14.50 101.40 10.20 103.00 9.30 105.20 C9.00 106.60 11.50 107.90 17.40 110.10 C20.00 111.00 22.50 112.00 24.50 113.00 C27.00 114.20 29.00 116.00 28.60 118.00" fill="none" stroke="#5c5650" stroke-width="2.6" transform="translate(0,-0.2)"/><path d="M10.50 106.80 C12.50 108.00 15.00 108.70 17.40 109.50 C20.00 110.40 23.00 111.50 25.50 112.80" fill="none" stroke="#aaa49c" stroke-width="1.3" stroke-linecap="round" transform="translate(0,-0.5)"/><path d="M17.60 122.00 C14.50 122.40 10.20 124.00 9.30 126.20 C9.00 127.60 11.50 128.90 17.40 131.10 C20.00 132.00 22.50 133.00 24.50 134.00 C27.00 135.20 29.00 137.00 28.60 139.00" fill="none" stroke="#35312d" stroke-width="4.6"/><path d="M17.60 122.00 C14.50 122.40 10.20 124.00 9.30 126.20 C9.00 127.60 11.50 128.90 17.40 131.10 C20.00 132.00 22.50 133.00 24.50 134.00 C27.00 135.20 29.00 137.00 28.60 139.00" fill="none" stroke="#5c5650" stroke-width="2.6" transform="translate(0,-0.2)"/><path d="M10.50 127.80 C12.50 129.00 15.00 129.70 17.40 130.50 C20.00 131.40 23.00 132.50 25.50 133.80" fill="none" stroke="#aaa49c" stroke-width="1.3" stroke-linecap="round" transform="translate(0,-0.5)"/><path d="M17.60 143.00 C14.50 143.40 10.20 145.00 9.30 147.20 C9.00 148.60 11.50 149.90 17.40 152.10 C20.00 153.00 22.50 154.00 24.50 155.00 C27.00 156.20 29.00 158.00 28.60 160.00" fill="none" stroke="#35312d" stroke-width="4.6"/><path d="M17.60 143.00 C14.50 143.40 10.20 145.00 9.30 147.20 C9.00 148.60 11.50 149.90 17.40 152.10 C20.00 153.00 22.50 154.00 24.50 155.00 C27.00 156.20 29.00 158.00 28.60 160.00" fill="none" stroke="#5c5650" stroke-width="2.6" transform="translate(0,-0.2)"/><path d="M10.50 148.80 C12.50 150.00 15.00 150.70 17.40 151.50 C20.00 152.40 23.00 153.50 25.50 154.80" fill="none" stroke="#aaa49c" stroke-width="1.3" stroke-linecap="round" transform="translate(0,-0.5)"/><path d="M17.60 164.00 C14.50 164.40 10.20 166.00 9.30 168.20 C9.00 169.60 11.50 170.90 17.40 173.10 C20.00 174.00 22.50 175.00 24.50 176.00 C27.00 177.20 29.00 179.00 28.60 181.00" fill="none" stroke="#35312d" stroke-width="4.6"/><path d="M17.60 164.00 C14.50 164.40 10.20 166.00 9.30 168.20 C9.00 169.60 11.50 170.90 17.40 173.10 C20.00 174.00 22.50 175.00 24.50 176.00 C27.00 177.20 29.00 179.00 28.60 181.00" fill="none" stroke="#5c5650" stroke-width="2.6" transform="translate(0,-0.2)"/><path d="M10.50 169.80 C12.50 171.00 15.00 171.70 17.40 172.50 C20.00 173.40 23.00 174.50 25.50 175.80" fill="none" stroke="#aaa49c" stroke-width="1.3" stroke-linecap="round" transform="translate(0,-0.5)"/><path d="M17.60 185.00 C14.50 185.40 10.20 187.00 9.30 189.20 C9.00 190.60 11.50 191.90 17.40 194.10 C20.00 195.00 22.50 196.00 24.50 197.00 C27.00 198.20 29.00 200.00 28.60 202.00" fill="none" stroke="#35312d" stroke-width="4.6"/><path d="M17.60 185.00 C14.50 185.40 10.20 187.00 9.30 189.20 C9.00 190.60 11.50 191.90 17.40 194.10 C20.00 195.00 22.50 196.00 24.50 197.00 C27.00 198.20 29.00 200.00 28.60 202.00" fill="none" stroke="#5c5650" stroke-width="2.6" transform="translate(0,-0.2)"/><path d="M10.50 190.80 C12.50 192.00 15.00 192.70 17.40 193.50 C20.00 194.40 23.00 195.50 25.50 196.80" fill="none" stroke="#aaa49c" stroke-width="1.3" stroke-linecap="round" transform="translate(0,-0.5)"/><path d="M17.60 206.00 C14.50 206.40 10.20 208.00 9.30 210.20 C9.00 211.60 11.50 212.90 17.40 215.10 C20.00 216.00 22.50 217.00 24.50 218.00 C27.00 219.20 29.00 221.00 28.60 223.00" fill="none" stroke="#35312d" stroke-width="4.6"/><path d="M17.60 206.00 C14.50 206.40 10.20 208.00 9.30 210.20 C9.00 211.60 11.50 212.90 17.40 215.10 C20.00 216.00 22.50 217.00 24.50 218.00 C27.00 219.20 29.00 221.00 28.60 223.00" fill="none" stroke="#5c5650" stroke-width="2.6" transform="translate(0,-0.2)"/><path d="M10.50 211.80 C12.50 213.00 15.00 213.70 17.40 214.50 C20.00 215.40 23.00 216.50 25.50 217.80" fill="none" stroke="#aaa49c" stroke-width="1.3" stroke-linecap="round" transform="translate(0,-0.5)"/><path d="M17.60 227.00 C14.50 227.40 10.20 229.00 9.30 231.20 C9.00 232.60 11.50 233.90 17.40 236.10 C20.00 237.00 22.50 238.00 24.50 239.00 C27.00 240.20 29.00 242.00 28.60 244.00" fill="none" stroke="#35312d" stroke-width="4.6"/><path d="M17.60 227.00 C14.50 227.40 10.20 229.00 9.30 231.20 C9.00 232.60 11.50 233.90 17.40 236.10 C20.00 237.00 22.50 238.00 24.50 239.00 C27.00 240.20 29.00 242.00 28.60 244.00" fill="none" stroke="#5c5650" stroke-width="2.6" transform="translate(0,-0.2)"/><path d="M10.50 232.80 C12.50 234.00 15.00 234.70 17.40 235.50 C20.00 236.40 23.00 237.50 25.50 238.80" fill="none" stroke="#aaa49c" stroke-width="1.3" stroke-linecap="round" transform="translate(0,-0.5)"/><path d="M17.60 248.00 C14.50 248.40 10.20 250.00 9.30 252.20 C9.00 253.60 11.50 254.90 17.40 257.10 C20.00 258.00 22.50 259.00 24.50 260.00 C27.00 261.20 29.00 263.00 28.60 265.00" fill="none" stroke="#35312d" stroke-width="4.6"/><path d="M17.60 248.00 C14.50 248.40 10.20 250.00 9.30 252.20 C9.00 253.60 11.50 254.90 17.40 257.10 C20.00 258.00 22.50 259.00 24.50 260.00 C27.00 261.20 29.00 263.00 28.60 265.00" fill="none" stroke="#5c5650" stroke-width="2.6" transform="translate(0,-0.2)"/><path d="M10.50 253.80 C12.50 255.00 15.00 255.70 17.40 256.50 C20.00 257.40 23.00 258.50 25.50 259.80" fill="none" stroke="#aaa49c" stroke-width="1.3" stroke-linecap="round" transform="translate(0,-0.5)"/><path d="M17.60 269.00 C14.50 269.40 10.20 271.00 9.30 273.20 C9.00 274.60 11.50 275.90 17.40 278.10 C20.00 279.00 22.50 280.00 24.50 281.00 C27.00 282.20 29.00 284.00 28.60 286.00" fill="none" stroke="#35312d" stroke-width="4.6"/><path d="M17.60 269.00 C14.50 269.40 10.20 271.00 9.30 273.20 C9.00 274.60 11.50 275.90 17.40 278.10 C20.00 279.00 22.50 280.00 24.50 281.00 C27.00 282.20 29.00 284.00 28.60 286.00" fill="none" stroke="#5c5650" stroke-width="2.6" transform="translate(0,-0.2)"/><path d="M10.50 274.80 C12.50 276.00 15.00 276.70 17.40 277.50 C20.00 278.40 23.00 279.50 25.50 280.80" fill="none" stroke="#aaa49c" stroke-width="1.3" stroke-linecap="round" transform="translate(0,-0.5)"/><path d="M17.60 290.00 C14.50 290.40 10.20 292.00 9.30 294.20 C9.00 295.60 11.50 296.90 17.40 299.10 C20.00 300.00 22.50 301.00 24.50 302.00 C27.00 303.20 29.00 305.00 28.60 307.00" fill="none" stroke="#35312d" stroke-width="4.6"/><path d="M17.60 290.00 C14.50 290.40 10.20 292.00 9.30 294.20 C9.00 295.60 11.50 296.90 17.40 299.10 C20.00 300.00 22.50 301.00 24.50 302.00 C27.00 303.20 29.00 305.00 28.60 307.00" fill="none" stroke="#5c5650" stroke-width="2.6" transform="translate(0,-0.2)"/><path d="M10.50 295.80 C12.50 297.00 15.00 297.70 17.40 298.50 C20.00 299.40 23.00 300.50 25.50 301.80" fill="none" stroke="#aaa49c" stroke-width="1.3" stroke-linecap="round" transform="translate(0,-0.5)"/><path d="M17.60 311.00 C14.50 311.40 10.20 313.00 9.30 315.20 C9.00 316.60 11.50 317.90 17.40 320.10 C20.00 321.00 22.50 322.00 24.50 323.00 C27.00 324.20 29.00 326.00 28.60 328.00" fill="none" stroke="#35312d" stroke-width="4.6"/><path d="M17.60 311.00 C14.50 311.40 10.20 313.00 9.30 315.20 C9.00 316.60 11.50 317.90 17.40 320.10 C20.00 321.00 22.50 322.00 24.50 323.00 C27.00 324.20 29.00 326.00 28.60 328.00" fill="none" stroke="#5c5650" stroke-width="2.6" transform="translate(0,-0.2)"/><path d="M10.50 316.80 C12.50 318.00 15.00 318.70 17.40 319.50 C20.00 320.40 23.00 321.50 25.50 322.80" fill="none" stroke="#aaa49c" stroke-width="1.3" stroke-linecap="round" transform="translate(0,-0.5)"/><path d="M17.60 332.00 C14.50 332.40 10.20 334.00 9.30 336.20 C9.00 337.60 11.50 338.90 17.40 341.10 C20.00 342.00 22.50 343.00 24.50 344.00 C27.00 345.20 29.00 347.00 28.60 349.00" fill="none" stroke="#35312d" stroke-width="4.6"/><path d="M17.60 332.00 C14.50 332.40 10.20 334.00 9.30 336.20 C9.00 337.60 11.50 338.90 17.40 341.10 C20.00 342.00 22.50 343.00 24.50 344.00 C27.00 345.20 29.00 347.00 28.60 349.00" fill="none" stroke="#5c5650" stroke-width="2.6" transform="translate(0,-0.2)"/><path d="M10.50 337.80 C12.50 339.00 15.00 339.70 17.40 340.50 C20.00 341.40 23.00 342.50 25.50 343.80" fill="none" stroke="#aaa49c" stroke-width="1.3" stroke-linecap="round" transform="translate(0,-0.5)"/><rect x="17" y="0" width="1.3" height="322" fill="#000" opacity="0"/></svg>
<span class="t" id="t21" style="left:117.00px;top:181.94px;font-size:17.5px;line-height:22px;font-weight:bold;color:#1d5c16;transform:scaleX(1.2078);-webkit-text-stroke:0.5px #1d5c16;">Журнал успеваемости</span>
<div style="left:117px;top:222px;width:650px;height:153px;background:#0c880c;"></div>
<div style="left:118px;top:223px;width:165px;height:43px;background:#bde88f;"></div>
<div style="left:284px;top:223px;width:179px;height:21px;background:#bde88f;"></div>
<div style="left:464px;top:223px;width:179px;height:21px;background:#bde88f;"></div>
<div style="left:644px;top:223px;width:122px;height:21px;background:#bde88f;"></div>
<div style="left:284px;top:245px;width:56px;height:21px;background:#ccffcc;"></div>
<div style="left:341px;top:245px;width:63px;height:21px;background:#ccffcc;"></div>
<div style="left:405px;top:245px;width:58px;height:21px;background:#ccffcc;"></div>
<div style="left:464px;top:245px;width:56px;height:21px;background:#ccffcc;"></div>
<div style="left:521px;top:245px;width:63px;height:21px;background:#ccffcc;"></div>
<div style="left:585px;top:245px;width:58px;height:21px;background:#ccffcc;"></div>
<div style="left:644px;top:245px;width:63px;height:21px;background:#ccffcc;"></div>
<div style="left:708px;top:245px;width:58px;height:21px;background:#ccffcc;"></div>
<div style="left:118px;top:267px;width:165px;height:34px;background:#fff;"></div>
<div style="left:284px;top:267px;width:56px;height:34px;background:#fff;"></div>
<div style="left:341px;top:267px;width:63px;height:34px;background:#fff;"></div>
<div style="left:405px;top:267px;width:58px;height:34px;background:#fff;"></div>
<div style="left:464px;top:267px;width:56px;height:34px;background:#fff;"></div>
<div style="left:521px;top:267px;width:63px;height:34px;background:#fff;"></div>
<div style="left:585px;top:267px;width:58px;height:34px;background:#fff;"></div>
<div style="left:644px;top:267px;width:63px;height:34px;background:#fff;"></div>
<div style="left:708px;top:267px;width:58px;height:34px;background:#fff;"></div>
<div style="left:118px;top:302px;width:165px;height:21px;background:#fff;"></div>
<div style="left:284px;top:302px;width:56px;height:21px;background:#fff;"></div>
<div style="left:341px;top:302px;width:63px;height:21px;background:#fff;"></div>
<div style="left:405px;top:302px;width:58px;height:21px;background:#fff;"></div>
<div style="left:464px;top:302px;width:56px;height:21px;background:#fff;"></div>
<div style="left:521px;top:302px;width:63px;height:21px;background:#fff;"></div>
<div style="left:585px;top:302px;width:58px;height:21px;background:#fff;"></div>
<div style="left:644px;top:302px;width:63px;height:21px;background:#fff;"></div>
<div style="left:708px;top:302px;width:58px;height:21px;background:#fff;"></div>
<div style="left:118px;top:324px;width:165px;height:28px;background:#fff;"></div>
<div style="left:284px;top:324px;width:56px;height:28px;background:#fff;"></div>
<div style="left:341px;top:324px;width:63px;height:28px;background:#fff;"></div>
<div style="left:405px;top:324px;width:58px;height:28px;background:#fff;"></div>
<div style="left:464px;top:324px;width:56px;height:28px;background:#fff;"></div>
<div style="left:521px;top:324px;width:63px;height:28px;background:#fff;"></div>
<div style="left:585px;top:324px;width:58px;height:28px;background:#fff;"></div>
<div style="left:644px;top:324px;width:63px;height:28px;background:#fff;"></div>
<div style="left:708px;top:324px;width:58px;height:28px;background:#fff;"></div>
<div style="left:118px;top:353px;width:525px;height:21px;background:#bde88f;"></div>
<div style="left:644px;top:353px;width:63px;height:21px;background:#fff;"></div>
<div style="left:708px;top:353px;width:58px;height:21px;background:#fff;"></div>
<span class="t" id="t22" style="left:184.00px;top:238.05px;font-size:11.1px;line-height:15px;font-weight:bold;color:#000;transform:scaleX(1.2150);-webkit-text-stroke:0.3px #000;">Тема</span>
<span class="t" id="t23" style="left:343.92px;top:226.15px;font-size:11.1px;line-height:15px;font-weight:bold;color:#000;transform:scaleX(1.1515);-webkit-text-stroke:0.3px #000;">Вопросы</span>
<span class="t" id="t24" style="left:529.50px;top:226.15px;font-size:11.1px;line-height:15px;font-weight:bold;color:#000;transform:scaleX(1.2000);-webkit-text-stroke:0.3px #000;">Задачи</span>
<span class="t" id="t25" style="left:685.92px;top:226.15px;font-size:11.1px;line-height:15px;font-weight:bold;color:#000;transform:scaleX(1.1545);-webkit-text-stroke:0.3px #000;">Всего</span>
<span class="t" id="t26" style="left:292.41px;top:248.65px;font-size:11.1px;line-height:15px;font-weight:bold;color:#000;transform:scaleX(1.1870);-webkit-text-stroke:0.3px #000;">Всего</span>
<span class="t" id="t27" style="left:346.90px;top:248.65px;font-size:11.1px;line-height:15px;font-weight:bold;color:#000;transform:scaleX(1.1928);-webkit-text-stroke:0.3px #000;">Решено</span>
<span class="t" id="t28" style="left:413.41px;top:248.65px;font-size:11.1px;line-height:15px;font-weight:bold;color:#000;transform:scaleX(1.1704);-webkit-text-stroke:0.3px #000;">Верно</span>
<span class="t" id="t29" style="left:472.91px;top:248.65px;font-size:11.1px;line-height:15px;font-weight:bold;color:#000;transform:scaleX(1.1707);-webkit-text-stroke:0.3px #000;">Всего</span>
<span class="t" id="t30" style="left:526.91px;top:248.65px;font-size:11.1px;line-height:15px;font-weight:bold;color:#000;transform:scaleX(1.1807);-webkit-text-stroke:0.3px #000;">Решено</span>
<span class="t" id="t31" style="left:593.92px;top:248.65px;font-size:11.1px;line-height:15px;font-weight:bold;color:#000;transform:scaleX(1.1556);-webkit-text-stroke:0.3px #000;">Верно</span>
<span class="t" id="t32" style="left:649.91px;top:248.65px;font-size:11.1px;line-height:15px;font-weight:bold;color:#000;transform:scaleX(1.1807);-webkit-text-stroke:0.3px #000;">Решено</span>
<span class="t" id="t33" style="left:716.93px;top:248.65px;font-size:11.1px;line-height:15px;font-weight:bold;color:#000;transform:scaleX(1.1407);-webkit-text-stroke:0.3px #000;">Верно</span>
<span class="t" id="t34" style="left:121.86px;top:270.52px;font-size:11.5px;line-height:15px;font-weight:normal;color:#000;transform:scaleX(1.1365);">1.1. Электрический</span>
<span class="t" id="t35" style="left:122.72px;top:283.52px;font-size:11.5px;line-height:15px;font-weight:normal;color:#000;transform:scaleX(1.1207);">заряд. Закон Кулона</span>
<span class="t" id="t36" style="left:121.88px;top:305.52px;font-size:11.5px;line-height:15px;font-weight:normal;color:#000;transform:scaleX(1.1231);">1.2. Электрическое поле</span>
<span class="t" id="t37" style="left:122.46px;top:321.52px;font-size:11.5px;line-height:15px;font-weight:normal;color:#000;transform:scaleX(1.0833);">6.9. Элементарные</span>
<span class="t" id="t38" style="left:122.18px;top:334.52px;font-size:11.5px;line-height:15px;font-weight:normal;color:#000;transform:scaleX(1.0867);">частицы</span>
<span class="t" id="t39" style="left:308.25px;top:276.52px;font-size:11.5px;line-height:15px;font-weight:normal;color:#000;transform:scaleX(1.0000);">5</span>
<span class="t" id="t40" style="left:368.75px;top:276.52px;font-size:11.5px;line-height:15px;font-weight:normal;color:#000;transform:scaleX(1.0000);">5</span>
<span class="t" id="t41" style="left:430.23px;top:276.52px;font-size:11.5px;line-height:15px;font-weight:normal;color:#000;transform:scaleX(1.0476);">2</span>
<span class="t" id="t42" style="left:488.25px;top:276.52px;font-size:11.5px;line-height:15px;font-weight:normal;color:#000;transform:scaleX(1.0000);">3</span>
<span class="t" id="t43" style="left:548.73px;top:276.52px;font-size:11.5px;line-height:15px;font-weight:normal;color:#000;transform:scaleX(1.0476);">2</span>
<span class="t" id="t44" style="left:610.25px;top:276.52px;font-size:11.5px;line-height:15px;font-weight:normal;color:#000;transform:scaleX(1.0000);">0</span>
<span class="t" id="t45" style="left:308.25px;top:305.52px;font-size:11.5px;line-height:15px;font-weight:normal;color:#000;transform:scaleX(1.0000);">5</span>
<span class="t" id="t46" style="left:368.75px;top:305.52px;font-size:11.5px;line-height:15px;font-weight:normal;color:#000;transform:scaleX(1.0000);">0</span>
<span class="t" id="t47" style="left:430.25px;top:305.52px;font-size:11.5px;line-height:15px;font-weight:normal;color:#000;transform:scaleX(1.0000);">0</span>
<span class="t" id="t48" style="left:488.25px;top:305.52px;font-size:11.5px;line-height:15px;font-weight:normal;color:#000;transform:scaleX(1.0000);">3</span>
<span class="t" id="t49" style="left:548.75px;top:305.52px;font-size:11.5px;line-height:15px;font-weight:normal;color:#000;transform:scaleX(1.0000);">0</span>
<span class="t" id="t50" style="left:610.25px;top:305.52px;font-size:11.5px;line-height:15px;font-weight:normal;color:#000;transform:scaleX(1.0000);">0</span>
<span class="t" id="t51" style="left:308.25px;top:327.52px;font-size:11.5px;line-height:15px;font-weight:normal;color:#000;transform:scaleX(1.0000);">5</span>
<span class="t" id="t52" style="left:368.75px;top:327.52px;font-size:11.5px;line-height:15px;font-weight:normal;color:#000;transform:scaleX(1.0000);">0</span>
<span class="t" id="t53" style="left:430.25px;top:327.52px;font-size:11.5px;line-height:15px;font-weight:normal;color:#000;transform:scaleX(1.0000);">0</span>
<span class="t" id="t54" style="left:488.25px;top:327.52px;font-size:11.5px;line-height:15px;font-weight:normal;color:#000;transform:scaleX(1.0000);">3</span>
<span class="t" id="t55" style="left:548.75px;top:327.52px;font-size:11.5px;line-height:15px;font-weight:normal;color:#000;transform:scaleX(1.0000);">0</span>
<span class="t" id="t56" style="left:610.25px;top:327.52px;font-size:11.5px;line-height:15px;font-weight:normal;color:#000;transform:scaleX(1.0000);">0</span>
<span class="t" id="t57" style="left:672.94px;top:276.52px;font-size:11.5px;line-height:15px;font-weight:normal;color:#000;transform:scaleX(1.1287);">82 %</span>
<span class="t" id="t58" style="left:731.85px;top:276.52px;font-size:11.5px;line-height:15px;font-weight:normal;color:#000;transform:scaleX(1.1515);">17 %</span>
<span class="t" id="t59" style="left:679.93px;top:305.52px;font-size:11.5px;line-height:15px;font-weight:normal;color:#000;transform:scaleX(1.1316);">0 %</span>
<span class="t" id="t60" style="left:739.43px;top:305.52px;font-size:11.5px;line-height:15px;font-weight:normal;color:#000;transform:scaleX(1.1316);">0 %</span>
<span class="t" id="t61" style="left:679.93px;top:327.52px;font-size:11.5px;line-height:15px;font-weight:normal;color:#000;transform:scaleX(1.1316);">0 %</span>
<span class="t" id="t62" style="left:739.43px;top:327.52px;font-size:11.5px;line-height:15px;font-weight:normal;color:#000;transform:scaleX(1.1316);">0 %</span>
<span class="t" id="t63" style="left:534.70px;top:356.05px;font-size:11.1px;line-height:15px;font-weight:bold;color:#000;transform:scaleX(1.2089);-webkit-text-stroke:0.3px #000;">Общая оценка</span>
<span class="t" id="t64" style="left:677.50px;top:356.05px;font-size:11.1px;line-height:15px;font-weight:bold;color:#000;transform:scaleX(1.2895);-webkit-text-stroke:0.3px #000;">4 %</span>
<span class="t" id="t65" style="left:736.17px;top:356.05px;font-size:11.1px;line-height:15px;font-weight:bold;color:#000;transform:scaleX(1.3333);-webkit-text-stroke:0.3px #000;">2 %</span>
<svg style="left:121.5px;top:417.4px" width="32" height="32" viewBox="0 0 32 32"><circle cx="16" cy="16" r="14.6" fill="#007c4c"/><circle cx="16" cy="16" r="12.1" fill="none" stroke="#f0fff4" stroke-width="1.1"/><path d="M16.6 8.4 L22.6 14.6 H19.6 V19 C19.6 21.800 18.200 23 15.800 23 H10.800 V20.500 H13.600 V14.600 H10.600 Z" fill="#007c4c" stroke="#f4fff6" stroke-width="1.6" stroke-linejoin="round"/></svg>
<div style="left:612px;top:420px;width:157px;height:27px;background:#007c4c;border-radius:6px"></div>
<div style="left:614px;top:422px;width:153px;height:23px;box-sizing:border-box;border:1px solid #d8f0e0;border-radius:4px"></div>
<span class="t" id="t66" style="left:622.73px;top:426.52px;font-size:11.5px;line-height:15px;font-weight:bold;color:#fff;transform:scaleX(1.0754);-webkit-text-stroke:0.3px #fff;">СБРОС РЕЗУЛЬТАТОВ</span>
<div class="dither" style="left:781px;top:152px;width:16px;height:321px;"></div>
<div class="btn" style="left:781px;top:152px;width:16px;height:16px;"></div>
<div class="btn" style="left:781px;top:168px;width:16px;height:64px;"></div>
<div class="btn" style="left:781px;top:457px;width:16px;height:16px;"></div>
<svg style="left:785px;top:158px" width="7" height="4" viewBox="0 0 7 4" shape-rendering="crispEdges"><path d="M3 0h1v1h-1zM2 1h3v1h-3zM1 2h5v1h-5zM0 3h7v1h-7z" fill="#000"/></svg>
<svg style="left:785px;top:463px" width="7" height="4" viewBox="0 0 7 4" shape-rendering="crispEdges"><path d="M0 0h7v1h-7zM1 1h5v1h-5zM2 2h3v1h-3zM3 3h1v1h-1z" fill="#000"/></svg>
<div class="dither" style="left:7px;top:473px;width:774px;height:16px;"></div>
<div class="btn" style="left:7px;top:473px;width:16px;height:16px;"></div>
<div class="btn" style="left:23px;top:473px;width:736px;height:16px;"></div>
<div class="btn" style="left:765px;top:473px;width:16px;height:16px;"></div>
<svg style="left:14px;top:477px" width="4" height="7" viewBox="0 0 4 7" shape-rendering="crispEdges"><path d="M3 0h1v7h-1zM2 1h1v5h-1zM1 2h1v3h-1zM0 3h1v1h-1z" fill="#000"/></svg>
<svg style="left:771px;top:477px" width="4" height="7" viewBox="0 0 4 7" shape-rendering="crispEdges"><path d="M0 0h1v7h-1zM1 1h1v5h-1zM2 2h1v3h-1zM3 3h1v1h-1z" fill="#000"/></svg>
<div style="left:781px;top:473px;width:16px;height:16px;background:#d4d0c8;"></div>
<div style="left:797px;top:473px;width:2px;height:16px;background:#d4d0c8;"></div>
<div class="sunk" style="left:5px;top:493px;width:569px;height:18px;"></div>
<div class="sunk" style="left:576px;top:493px;width:22px;height:18px;"></div>
<div class="sunk" style="left:600px;top:493px;width:22px;height:18px;"></div>
<div class="sunk" style="left:624px;top:493px;width:22px;height:18px;"></div>
<div class="sunk" style="left:648px;top:493px;width:151px;height:18px;"></div>
<svg style="left:6px;top:494px" width="18" height="17" viewBox="0 0 18 17" >
<path d="M5.500 1.500h7.500l3 3v10.500h-10.500z" fill="#dce4f8" stroke="#6878c0" stroke-width="1"/>
<path d="M13 1.500v3h3z" fill="#fff" stroke="#8898c8" stroke-width="0.600"/>
<circle cx="7.300" cy="8.800" r="3.700" fill="none" stroke="#1c58e0" stroke-width="2.200"/>
<rect x="3.300" y="8" width="8" height="1.600" fill="#2a78f0"/>
<path d="M7.500 9.600h5v3h-5z" fill="#dce4f8"/>
<path d="M10.300 10.500c-.6 1.400-1.800 2-3 2" stroke="#1c58e0" stroke-width="2" fill="none"/>
<path d="M1.500 12c1-4 5-7.500 9-7.800" stroke="#50b8f8" stroke-width="1" fill="none"/>
</svg>
<span class="t" id="t67" style="left:25.56px;top:494.52px;font-size:11.5px;line-height:15px;font-weight:normal;color:#000;transform:scaleX(0.9423);">Done</span>
<svg style="left:649px;top:493px" width="19" height="18" viewBox="0 0 19 18" >
<rect x="10.500" y="2.500" width="5.500" height="4.500" fill="#e8f0f8" stroke="#202848" stroke-width="0.900"/>
<rect x="11.500" y="3.300" width="3.500" height="2.400" fill="#38c0f0"/>
<rect x="10.800" y="8" width="5" height="1.300" fill="#808890"/>
<path d="M12.500 9.500v2l3.500 3" stroke="#101838" stroke-width="1" fill="none"/>
<path d="M12 13.500h5" stroke="#38a8e0" stroke-width="1.400"/>
<rect x="2" y="5.500" width="9.500" height="8.500" rx="1" fill="#f0f0f8" stroke="#101848" stroke-width="1.100"/>
<rect x="4" y="7.500" width="5.500" height="4.500" fill="#3090f0" stroke="#6070a0" stroke-width="0.500"/>
<rect x="5" y="8.500" width="3.500" height="1.200" fill="#70d0ff"/>
<path d="M1.500 14.500h10.500v2h-10.500z" fill="#d8d8e0" stroke="#101848" stroke-width="0.900"/>
<path d="M3 16.200h8" stroke="#e0c040" stroke-width="0.600"/>
<path d="M1.500 3.500l2.500 1.500l4-4l1.500 1l-4.500 4.500h-2z" fill="#28a028" stroke="#187018" stroke-width="0.500"/>
<path d="M3.500 3.800l1 .700l3-3" stroke="#d0ffd0" stroke-width="0.800" fill="none"/>
<path d="M3 5.500h6" stroke="#2878d8" stroke-width="1.200"/>
</svg>
<span class="t" id="t68" style="left:669.05px;top:494.52px;font-size:11.5px;line-height:15px;font-weight:normal;color:#000;transform:scaleX(0.9485);">Local intranet</span>
<svg style="left:786px;top:498px" width="13" height="13" viewBox="0 0 13 13" shape-rendering="crispEdges"><path d="M11 0 L12 0 L0 12 L0 11Z M11 4 L12 4 L4 12 L4 11Z M11 8 L12 8 L8 12 L8 11Z" fill="#fff"/><path d="M12 1 L12 3 L3 12 L1 12Z M12 5 L12 7 L7 12 L5 12Z M12 9 L12 11 L11 12 L9 12Z" fill="#808080"/></svg>
</div>
</body>
</html>
